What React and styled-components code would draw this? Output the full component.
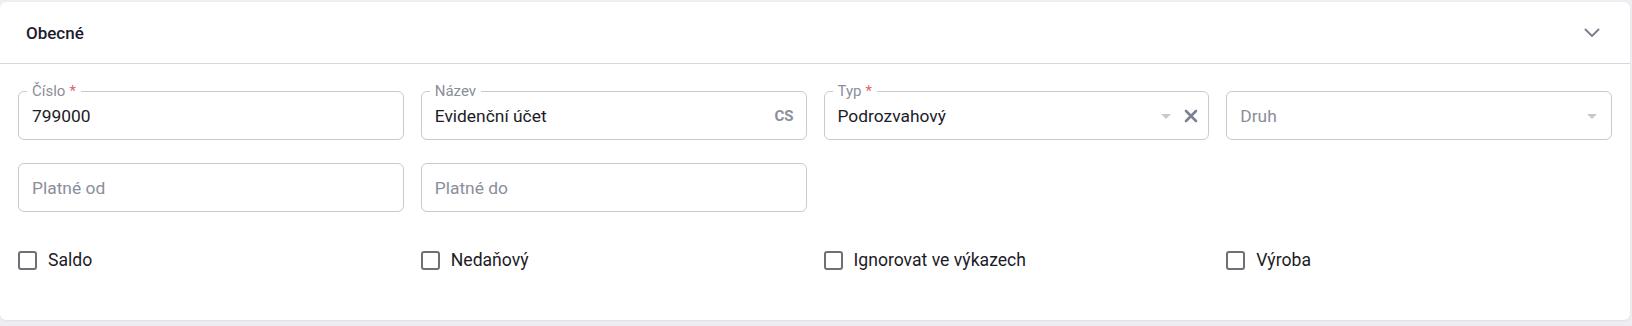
import React from 'react';
import styled, { createGlobalStyle } from 'styled-components';

const GlobalStyle = createGlobalStyle`
    html, body {
        margin: 0;
        padding: 0;
        background: #ededf2;
        font-family: Roboto, "Liberation Sans", Arial, sans-serif;
    }
    * { box-sizing: border-box; }
`;

const Page = styled.div`
    padding: 2px 2px 6px 0;
`;

const Card = styled.section`
    background: #fff;
    border-radius: 6px;
    box-shadow: 0 1px 2px rgba(30, 30, 60, 0.06);
`;

const Header = styled.div`
    display: flex;
    align-items: center;
    justify-content: space-between;
    height: 62px;
    padding: 0 30px 0 26px;
    border-bottom: 1px solid #d6d6de;
`;

const Title = styled.h3`
    margin: 0;
    font-size: 17px;
    font-weight: 500;
    color: #1e1b2e;
`;

const Body = styled.div`
    padding: 27px 18px 48px 18px;
`;

const Grid = styled.div`
    display: grid;
    grid-template-columns: repeat(4, 1fr);
    column-gap: 17px;
    row-gap: 23px;
`;

const Box = styled.div`
    position: relative;
    display: flex;
    align-items: center;
    height: 49px;
    padding: 0 10px 0 13px;
    border: 1px solid #c9c9d1;
    border-radius: 6px;
    background: #fff;
`;

const Label = styled.span`
    position: absolute;
    top: -10px;
    left: 8px;
    padding: 0 5px;
    background: #fff;
    font-size: 15px;
    line-height: 18px;
    color: #8b8e9b;
`;

const Star = styled.span`
    color: #e8616f;
    margin-left: 4px;
`;

const Value = styled.span`
    flex: 1;
    font-size: 17.4px;
    color: ${p => (p.$placeholder ? '#8b8e9b' : '#1c1b26')};
    white-space: nowrap;
`;

const Lang = styled.span`
    font-size: 15px;
    font-weight: 700;
    color: #8b8e9b;
    margin-right: 2px;
`;

const Caret = styled.span`
    width: 0;
    height: 0;
    border-left: 5px solid transparent;
    border-right: 5px solid transparent;
    border-top: 5px solid #c8c8d0;
    margin: 2px ${p => (p.$clear ? '13px' : '4px')} 0 0;
`;

const Clear = styled.span`
    display: flex;
    align-items: center;
    color: #7d8290;
`;

const Checks = styled.div`
    display: grid;
    grid-template-columns: repeat(4, 1fr);
    column-gap: 17px;
    margin-top: 36px;
`;

const Check = styled.label`
    display: flex;
    align-items: center;
    gap: 11px;
    height: 24px;
    font-size: 17.6px;
    color: #1c1b26;
`;

const Square = styled.span`
    flex: none;
    width: 19px;
    height: 19px;
    border: 2px solid #6f6f75;
    border-radius: 3px;
    background: #fff;
`;

const Chevron = () => (
    <svg width="16" height="10" viewBox="0 0 16 10" fill="none">
        <path d="M1.5 1.5 L8 8 L14.5 1.5" stroke="#7d8290" strokeWidth="2" strokeLinecap="round" strokeLinejoin="round" />
    </svg>
);

const Cross = () => (
    <svg width="14" height="14" viewBox="0 0 14 14" fill="none">
        <path d="M2 2 L12 12 M12 2 L2 12" stroke="#7d8290" strokeWidth="2.6" strokeLinecap="round" />
    </svg>
);

const Field = ({ label, required, children }) => (
    <Box>
        {label && (
            <Label>
                {label}
                {required && <Star>*</Star>}
            </Label>
        )}
        {children}
    </Box>
);

const checks = ['Saldo', 'Nedaňový', 'Ignorovat ve výkazech', 'Výroba'];

const App = () => {
    return (
        <Page>
            <GlobalStyle />
            <Card>
                <Header>
                    <Title>Obecné</Title>
                    <Chevron />
                </Header>
                <Body>
                    <Grid>
                        <Field label="Číslo" required>
                            <Value>799000</Value>
                        </Field>
                        <Field label="Název">
                            <Value>Evidenční účet</Value>
                            <Lang>CS</Lang>
                        </Field>
                        <Field label="Typ" required>
                            <Value>Podrozvahový</Value>
                            <Caret $clear />
                            <Clear><Cross /></Clear>
                        </Field>
                        <Field>
                            <Value $placeholder>Druh</Value>
                            <Caret />
                        </Field>
                        <Field>
                            <Value $placeholder>Platné od</Value>
                        </Field>
                        <Field>
                            <Value $placeholder>Platné do</Value>
                        </Field>
                    </Grid>
                    <Checks>
                        {checks.map(c => (
                            <Check key={c}>
                                <Square />
                                {c}
                            </Check>
                        ))}
                    </Checks>
                </Body>
            </Card>
        </Page>
    );
};

export default App;
